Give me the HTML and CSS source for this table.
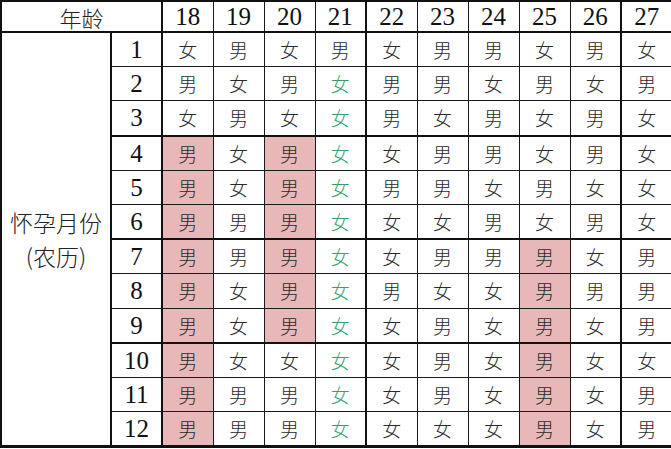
FILE: index.html
```html
<!DOCTYPE html>
<html lang="zh">
<head>
<meta charset="utf-8">
<title>清宫图</title>
<link rel="stylesheet" href="styles.css">
</head>
<body>
<table class="chart">
<colgroup>
<col class="c-label"><col class="c-month">
<col class="c-age"><col class="c-age"><col class="c-age"><col class="c-age"><col class="c-age"><col class="c-age"><col class="c-age"><col class="c-age"><col class="c-age"><col class="c-last">
</colgroup>
<thead>
<tr class="head">
<th colspan="2" class="corner">年龄</th>
<th class="num">18</th><th class="num">19</th><th class="num">20</th><th class="num tr">21</th><th class="num">22</th><th class="num">23</th><th class="num">24</th><th class="num">25</th><th class="num tr">26</th><th class="num">27</th>
</tr>
</thead>
<tbody>
<tr class="row"><td rowspan="12" class="label"><span class="label-line">怀孕月份</span><span class="label-line">(农历)</span></td><td class="num mon">1</td><td>女</td><td>男</td><td>女</td><td class="tr">男</td><td>女</td><td>男</td><td>男</td><td>女</td><td class="tr">男</td><td>女</td></tr>
<tr class="row"><td class="num mon">2</td><td>男</td><td>女</td><td>男</td><td class="tr g">女</td><td>男</td><td>男</td><td>女</td><td>男</td><td class="tr">女</td><td>男</td></tr>
<tr class="row thick-b"><td class="num mon">3</td><td>女</td><td>男</td><td>女</td><td class="tr g">女</td><td>男</td><td>女</td><td>男</td><td>女</td><td class="tr">男</td><td>女</td></tr>
<tr class="row"><td class="num mon">4</td><td class="hl">男</td><td>女</td><td class="hl">男</td><td class="tr g">女</td><td>女</td><td>男</td><td>男</td><td>女</td><td class="tr">男</td><td>女</td></tr>
<tr class="row"><td class="num mon">5</td><td class="hl">男</td><td>女</td><td class="hl">男</td><td class="tr g">女</td><td>男</td><td>男</td><td>女</td><td>男</td><td class="tr">女</td><td>女</td></tr>
<tr class="row thick-b"><td class="num mon">6</td><td class="hl">男</td><td>男</td><td class="hl">男</td><td class="tr g">女</td><td>女</td><td>女</td><td>男</td><td>女</td><td class="tr">男</td><td>女</td></tr>
<tr class="row"><td class="num mon">7</td><td class="hl">男</td><td>男</td><td class="hl">男</td><td class="tr g">女</td><td>女</td><td>男</td><td>男</td><td class="hl">男</td><td class="tr">女</td><td>男</td></tr>
<tr class="row"><td class="num mon">8</td><td class="hl">男</td><td>女</td><td class="hl">男</td><td class="tr g">女</td><td>男</td><td>女</td><td>女</td><td class="hl">男</td><td class="tr">男</td><td>男</td></tr>
<tr class="row thick-b"><td class="num mon">9</td><td class="hl">男</td><td>女</td><td class="hl">男</td><td class="tr g">女</td><td>女</td><td>男</td><td>女</td><td class="hl">男</td><td class="tr">女</td><td>男</td></tr>
<tr class="row"><td class="num mon">10</td><td class="hl">男</td><td>女</td><td>女</td><td class="tr g">女</td><td>女</td><td>男</td><td>女</td><td class="hl">男</td><td class="tr">女</td><td>女</td></tr>
<tr class="row"><td class="num mon">11</td><td class="hl">男</td><td>男</td><td>男</td><td class="tr g">女</td><td>女</td><td>男</td><td>女</td><td class="hl">男</td><td class="tr">女</td><td>男</td></tr>
<tr class="row last"><td class="num mon">12</td><td class="hl">男</td><td>男</td><td>男</td><td class="tr g">女</td><td>女</td><td>女</td><td>女</td><td class="hl">男</td><td class="tr">女</td><td>男</td></tr>
</tbody>
</table>
</body>
</html>
```
FILE: styles.css
```css
html, body {
  margin: 0;
  padding: 0;
  background: #ffffff;
}

.chart {
  border-collapse: collapse;
  table-layout: fixed;
  width: 671px;
  border-top: 2px solid #111;
  border-left: 2px solid #111;
  border-bottom: 3px solid #111;
  font-family: "Noto Sans CJK SC", "Noto Sans CJK JP", sans-serif;
}

.c-label { width: 110px; }
.c-month { width: 51px; }
.c-age { width: 51px; }
.c-last { width: 51px; }

.chart th,
.chart td {
  border: 1px solid #1a1a1a;
  padding: 0;
  text-align: center;
  vertical-align: middle;
  color: #2a2a2a;
  font-size: 19px;
  font-weight: 300;
  line-height: 1;
  overflow: hidden;
}

.head th {
  height: 29px;
  border-bottom: 2px solid #111;
}

.row td {
  height: 33.2px;
}

.row.thick-b td {
  border-bottom: 2px solid #111;
}

.row.last td {
  border-bottom: 3px solid #111;
}

.chart .tr {
  border-right: 2px solid #111;
}

.chart .corner {
  font-size: 22px;
  font-weight: 300;
  color: #222;
  border-right: 2px solid #111;
}

.chart .num {
  font-family: "Liberation Serif", "DejaVu Serif", serif;
  font-size: 25px;
  font-weight: 400;
  color: #111;
}

.chart .mon {
  border-left: 2px solid #111;
  border-right: 2px solid #111;
}

.chart .label {
  font-size: 23px;
  font-weight: 300;
  color: #222;
  border-right: 2px solid #111;
  border-bottom: 3px solid #111;
}

.label-line {
  display: block;
  line-height: 34px;
  height: 34px;
}

.chart .hl {
  background: #e8b8b9;
}

.chart .g {
  color: #35a06a;
}
```
